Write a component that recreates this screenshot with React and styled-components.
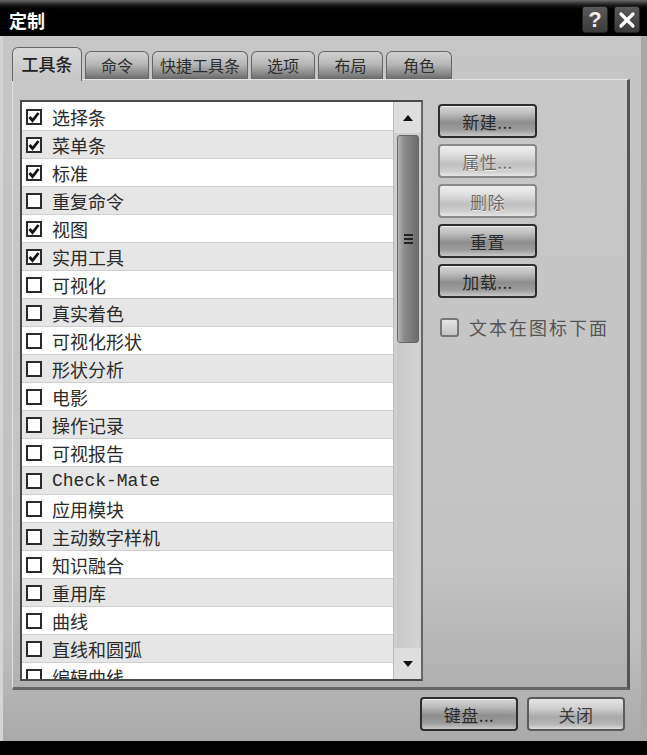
import React from "react"
import styled, { createGlobalStyle, css } from "styled-components"

const GlobalStyle = createGlobalStyle`
  html, body {
    margin: 0;
    padding: 0;
    background: #000;
  }
  #root {
    width: 647px;
    height: 755px;
  }
  * {
    box-sizing: border-box;
  }
`

const FONT = `"Noto Sans CJK SC", "Liberation Sans", sans-serif`

const tabs = ["工具条", "命令", "快捷工具条", "选项", "布局", "角色"]
const tabWidths = [70, 64, 96, 64, 65, 66]

const rows = [
  { label: "选择条", checked: true },
  { label: "菜单条", checked: true },
  { label: "标准", checked: true },
  { label: "重复命令" },
  { label: "视图", checked: true },
  { label: "实用工具", checked: true },
  { label: "可视化" },
  { label: "真实着色" },
  { label: "可视化形状" },
  { label: "形状分析" },
  { label: "电影" },
  { label: "操作记录" },
  { label: "可视报告" },
  { label: "Check-Mate", mono: true },
  { label: "应用模块" },
  { label: "主动数字样机" },
  { label: "知识融合" },
  { label: "重用库" },
  { label: "曲线" },
  { label: "直线和圆弧" },
  { label: "编辑曲线" },
]

const sideButtons = [
  { label: "新建...", dark: true },
  { label: "属性...", dim: true },
  { label: "删除", dim: true },
  { label: "重置", dark: true },
  { label: "加载...", dark: true },
]

export default function App() {
  return (
    <>
      <GlobalStyle />
      <Window>
        <TitleBar>
          <Title>定制</Title>
          <TitleButtons>
            <CapButton>?</CapButton>
            <CapButton>
              <svg width="18" height="18" viewBox="0 0 18 18">
                <path d="M3 3 L15 15 M15 3 L3 15" stroke="#fff" strokeWidth="3.2" strokeLinecap="round" />
              </svg>
            </CapButton>
          </TitleButtons>
        </TitleBar>
        <Body>
          <TabStrip>
            {tabs.map((t, i) => (
              <Tab key={t} $active={i === 0} style={{ width: tabWidths[i] }}>
                {t}
              </Tab>
            ))}
          </TabStrip>
          <Panel>
            <ListBox>
              <Rows>
                {rows.map((r, i) => (
                  <Row key={r.label} $alt={i % 2 === 1}>
                    <Check>
                      {r.checked && (
                        <svg width="12" height="12" viewBox="0 0 12 12">
                          <path d="M1.5 6 L4.5 9.5 L10.5 2" fill="none" stroke="#111" strokeWidth="2.8" />
                        </svg>
                      )}
                    </Check>
                    <RowText $mono={r.mono}>{r.label}</RowText>
                  </Row>
                ))}
              </Rows>
              <ScrollBar>
                <Arrow>
                  <svg width="10" height="6" viewBox="0 0 10 6">
                    <path d="M0 6 L5 0 L10 6 Z" fill="#111" />
                  </svg>
                </Arrow>
                <Thumb>
                  <Grip>
                    <span />
                    <span />
                    <span />
                  </Grip>
                </Thumb>
                <Track />
                <Arrow>
                  <svg width="10" height="6" viewBox="0 0 10 6">
                    <path d="M0 0 L10 0 L5 6 Z" fill="#111" />
                  </svg>
                </Arrow>
              </ScrollBar>
            </ListBox>
            <SideColumn>
              {sideButtons.map((b) => (
                <MetalButton key={b.label} $dark={b.dark} $dim={b.dim} $w={99}>
                  {b.label}
                </MetalButton>
              ))}
              <OptionRow>
                <SmallBox />
                <OptionText>文本在图标下面</OptionText>
              </OptionRow>
            </SideColumn>
          </Panel>
          <Footer>
            <MetalButton $dark $w={98}>键盘...</MetalButton>
            <MetalButton $w={98}>关闭</MetalButton>
          </Footer>
        </Body>
        <BottomBand />
      </Window>
    </>
  )
}

const Window = styled.div`
  width: 647px;
  height: 755px;
  display: flex;
  flex-direction: column;
  background: #000;
  font-family: ${FONT};
`

const TitleBar = styled.div`
  height: 36px;
  flex: none;
  display: flex;
  align-items: center;
  justify-content: space-between;
  padding: 3px 7px 0 9px;
  background: linear-gradient(180deg, #6a6a6a 0px, #1a1a1a 5px, #000 9px, #000 100%);
`

const Title = styled.div`
  color: #fff;
  font-size: 18px;
  font-weight: 700;
`

const TitleButtons = styled.div`
  display: flex;
  gap: 6px;
`

const CapButton = styled.div`
  width: 26px;
  height: 27px;
  border-radius: 3px;
  background: linear-gradient(180deg, #5a5a5a 0%, #3a3a3a 100%);
  border: 1px solid #222;
  color: #eee;
  display: flex;
  align-items: center;
  justify-content: center;
  font-family: "Liberation Sans", sans-serif;
  font-weight: 700;
  font-size: 22px;
`

const Body = styled.div`
  flex: 1;
  display: flex;
  flex-direction: column;
  padding: 12px 11px 0 9px;
  background: linear-gradient(180deg, #c6c6c6 0%, #c0c0c0 85%, #a9a9a9 100%);
  border-left: 3px solid #d4d4d4;
  border-right: 6px solid #a8a8a8;
`

const TabStrip = styled.div`
  display: flex;
  align-items: flex-end;
  gap: 3px;
  height: 31px;
  position: relative;
  z-index: 1;
`

const Tab = styled.div`
  display: flex;
  align-items: center;
  justify-content: center;
  font-size: 16px;
  color: #2e2e2e;
  border: 1px solid #666;
  border-bottom: none;
  border-radius: 6px 6px 0 0;
  height: 28px;
  ${(p) =>
    p.$active
      ? css`
          height: 34px;
          margin-bottom: -2px;
          background: linear-gradient(180deg, #d8d8d8 0%, #c6c6c6 100%);
          color: #222;
          font-size: 17px;
          font-weight: 500;
          padding-bottom: 3px;
        `
      : css`
          background: linear-gradient(180deg, #d0d0d0 0%, #b8b8b8 45%, #888 80%, #6a6a6a 100%);
          padding-bottom: 2px;
        `}
`

const Panel = styled.div`
  height: 611px;
  flex: none;
  display: flex;
  align-items: flex-start;
  padding: 20px 0 0 7px;
  border-top: 1px solid #e6e6e6;
  border-left: 1px solid #e0e0e0;
  border-right: 3px solid #555;
  border-bottom: 3px solid #666;
  background: linear-gradient(180deg, #c8c8c8 0%, #c2c2c2 80%, #b0b0b0 100%);
`

const ListBox = styled.div`
  width: 403px;
  height: 581px;
  flex: none;
  display: flex;
  border: 2px solid #4a4a4a;
  border-right-color: #666;
  background: #fff;
  overflow: hidden;
`

const Rows = styled.div`
  flex: 1;
  overflow: hidden;
  padding-top: 1px;
`

const Row = styled.div`
  height: 28px;
  display: flex;
  align-items: center;
  gap: 10px;
  padding-left: 4px;
  background: ${(p) => (p.$alt ? "#e6e6e6" : "#fff")};
  border-bottom: 1px solid #cfcfcf;
`

const Check = styled.div`
  width: 16px;
  height: 16px;
  flex: none;
  border: 2px solid #2a2a2a;
  background: #fff;
  display: flex;
  align-items: center;
  justify-content: center;
`

const RowText = styled.span`
  font-size: 18px;
  color: #2a2a2a;
  white-space: nowrap;
  ${(p) =>
    p.$mono &&
    css`
      font-family: "Liberation Mono", "DejaVu Sans Mono", monospace;
      font-size: 18px;
    `}
`

const ScrollBar = styled.div`
  width: 28px;
  flex: none;
  display: flex;
  flex-direction: column;
  background: #cfcfcf;
  border-left: 1px solid #bbb;
`

const Arrow = styled.div`
  height: 31px;
  flex: none;
  display: flex;
  align-items: center;
  justify-content: center;
  background: #dedede;
`

const Thumb = styled.div`
  height: 208px;
  flex: none;
  margin: 2px 2px 0 3px;
  border-radius: 3px;
  background: linear-gradient(90deg, #b4b4b4 0%, #8c8c8c 30%, #7a7a7a 70%, #6c6c6c 100%);
  border: 1px solid #666;
  display: flex;
  align-items: center;
  justify-content: center;
`

const Grip = styled.div`
  display: flex;
  flex-direction: column;
  gap: 2px;
  & span {
    display: block;
    width: 9px;
    height: 2px;
    background: #222;
  }
`

const Track = styled.div`
  flex: 1;
  background: linear-gradient(90deg, #c8c8c8 0%, #d4d4d4 100%);
  margin: 0 2px 0 3px;
`

const SideColumn = styled.div`
  display: flex;
  flex-direction: column;
  align-items: flex-start;
  gap: 6px;
  padding-top: 4px;
  margin-left: 15px;
`

const MetalButton = styled.div`
  width: ${(p) => p.$w}px;
  height: 34px;
  display: flex;
  align-items: center;
  justify-content: center;
  font-size: 17px;
  border-radius: 4px;
  letter-spacing: 0.5px;
  ${(p) =>
    p.$dark
      ? css`
          color: #2a2a2a;
          border: 2px solid #2e2e2e;
          background: linear-gradient(180deg, #d6d6d6 0%, #bdbdbd 25%, #8e8e8e 55%, #9c9c9c 80%, #c8c8c8 100%);
          box-shadow: inset 0 1px 0 #eee;
        `
      : p.$dim
      ? css`
          color: #6a6a6a;
          text-shadow: 0 1px 0 #f2f2f2;
          border: 2px solid #8a8a8a;
          background: linear-gradient(180deg, #efefef 0%, #dedede 30%, #c0c0c0 60%, #cfcfcf 85%, #e6e6e6 100%);
        `
      : css`
          color: #3a3a3a;
          border: 2px solid #5a5a5a;
          background: linear-gradient(180deg, #e4e4e4 0%, #d0d0d0 30%, #a8a8a8 60%, #b8b8b8 85%, #dcdcdc 100%);
        `}
`

const OptionRow = styled.div`
  display: flex;
  align-items: center;
  gap: 10px;
  margin-top: 10px;
  padding-left: 2px;
`

const SmallBox = styled.div`
  width: 19px;
  height: 19px;
  border: 2px solid #777;
  border-radius: 3px;
  background: linear-gradient(180deg, #e4e4e4 0%, #c4c4c4 100%);
`

const OptionText = styled.span`
  font-size: 18px;
  color: #555;
  letter-spacing: 2px;
  white-space: nowrap;
`

const Footer = styled.div`
  display: flex;
  justify-content: flex-end;
  gap: 9px;
  padding-top: 7px;
  padding-right: 5px;
`

const BottomBand = styled.div`
  height: 14px;
  flex: none;
  background: #000;
`
